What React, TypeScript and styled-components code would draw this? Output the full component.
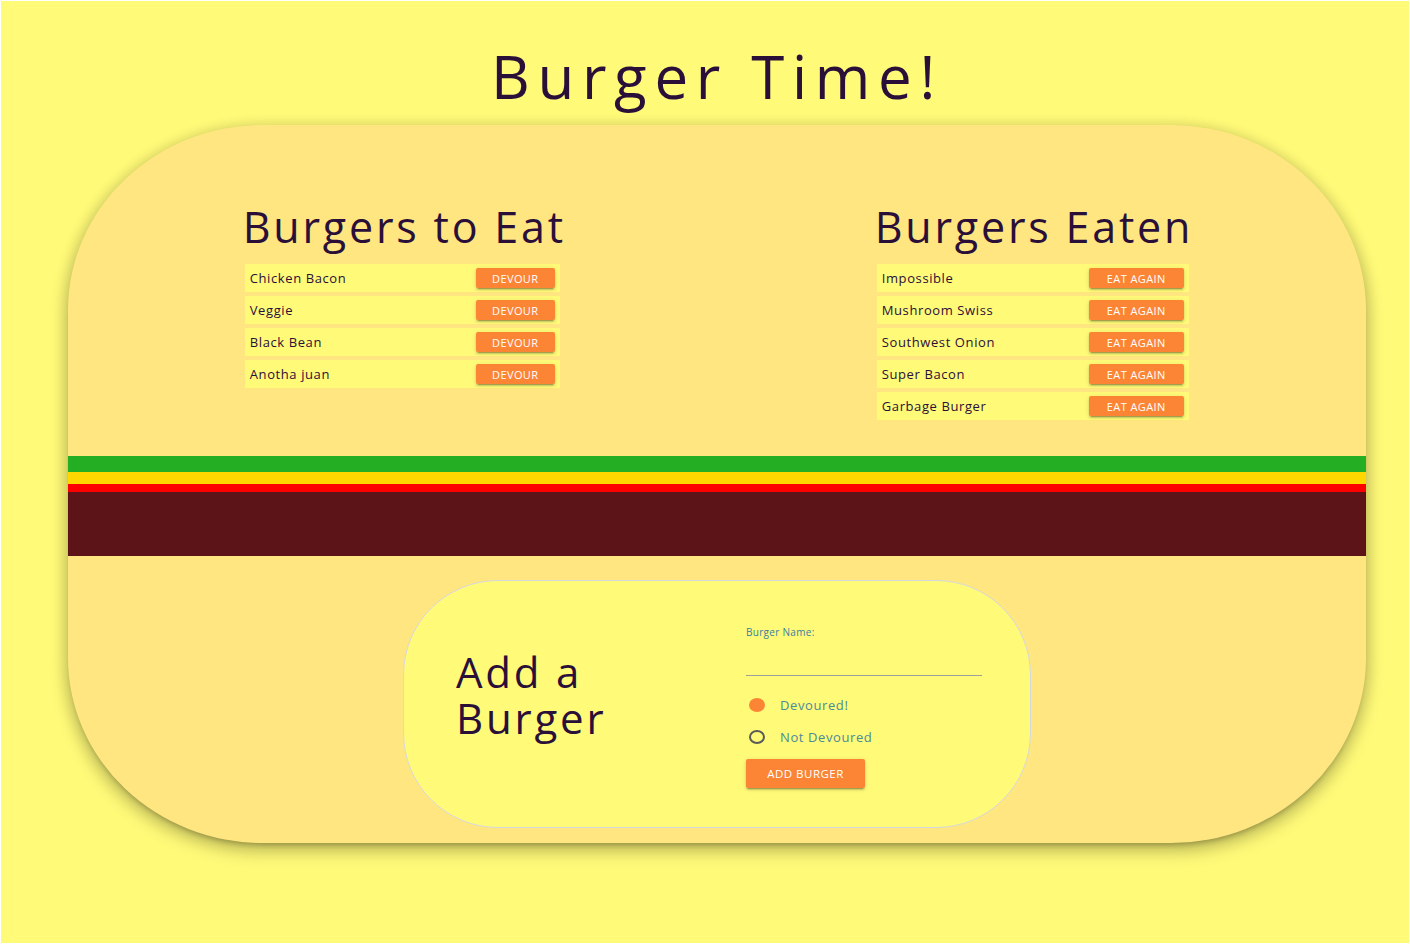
import React from "react";
import styled, { createGlobalStyle } from "styled-components";

const Global = createGlobalStyle`
  html, body { margin: 0; padding: 0; }
  body {
    background: #fffa78;
    font-family: "Open Sans", "Noto Sans", sans-serif;
    color: #2a0f38;
  }
`;

const Page = styled.div`
  width: 1410px;
  height: 944px;
  box-sizing: border-box;
  border: 1px solid #ffffff;
  padding: 36px 0 0 24px;
  display: flex;
  flex-direction: column;
  align-items: center;
`;

const Title = styled.h1`
  margin: 0;
  font-size: 60px;
  font-weight: 400;
  line-height: 78px;
  letter-spacing: 7.7px;
  color: #2a0f38;
`;

const MainCard = styled.div`
  margin-top: 10px;
  width: 1298px;
  height: 718px;
  background: #ffe680;
  border-radius: 195px / 185px;
  box-shadow: 0 8px 17px 2px rgba(0, 0, 0, 0.16), 0 3px 14px 2px rgba(0, 0, 0, 0.14),
    0 5px 5px -3px rgba(0, 0, 0, 0.22);
  display: flex;
  flex-direction: column;
  overflow: hidden;
`;

const Columns = styled.div`
  display: grid;
  grid-template-columns: 1fr 1fr;
  padding: 74px 18px 0 19px;
  height: 331px;
  box-sizing: border-box;
`;

const Column = styled.div`
  display: flex;
  flex-direction: column;
  align-items: center;
`;

const ColumnInner = styled.div<{ $w: number }>`
  width: ${(p) => p.$w}px;
  display: flex;
  flex-direction: column;
`;

const ColumnTitle = styled.h2`
  margin: 0 0 9px -2px;
  font-size: 43px;
  font-weight: 400;
  line-height: 56px;
  white-space: nowrap;
  letter-spacing: 2.8px;
`;

const List = styled.div`
  display: flex;
  flex-direction: column;
  gap: 4px;
`;

const Row = styled.div`
  height: 28px;
  background: #fffa78;
  display: flex;
  align-items: center;
  justify-content: space-between;
  padding: 0 5px 0 5px;
  font-size: 13px;
  letter-spacing: 0.6px;
  color: #2a0f38;
`;

const SmallButton = styled.button<{ $w: number }>`
  width: ${(p) => p.$w}px;
  height: 20px;
  border: none;
  border-radius: 2px;
  background: #fb8535;
  color: #ffffff;
  font-family: inherit;
  font-size: 11px;
  letter-spacing: 0.4px;
  text-transform: uppercase;
  padding: 0;
  box-shadow: 0 2px 2px 0 rgba(0, 0, 0, 0.14), 0 1px 5px 0 rgba(0, 0, 0, 0.12),
    0 3px 1px -2px rgba(0, 0, 0, 0.2);
`;

const Stripe = styled.div<{ $h: number; $c: string }>`
  height: ${(p) => p.$h}px;
  background: ${(p) => p.$c};
  flex-shrink: 0;
`;

const Bottom = styled.div`
  flex: 1;
  display: flex;
  justify-content: center;
  padding-top: 24px;
`;

const FormCard = styled.div`
  width: 628px;
  height: 248px;
  box-sizing: border-box;
  background: #fffa78;
  border: 1px solid #d6d8e0;
  border-radius: 95px;
  display: grid;
  grid-template-columns: 342px 1fr;
`;

const FormTitle = styled.h3`
  margin: 0;
  padding: 68px 0 0 52px;
  font-size: 42px;
  font-weight: 400;
  line-height: 46px;
  letter-spacing: 2.8px;
  color: #2a0f38;
`;

const Form = styled.div`
  padding-top: 45px;
  display: flex;
  flex-direction: column;
  width: 236px;
`;

const Label = styled.label`
  font-size: 10px;
  color: #3b7ea0;
  line-height: 12px;
  letter-spacing: 0.3px;
`;

const Input = styled.div`
  height: 37px;
  border-bottom: 1px solid #9e9e9e;
  margin-bottom: 13px;
`;

const RadioRow = styled.div`
  display: flex;
  align-items: center;
  height: 32px;
  font-size: 13px;
  color: #4b8a9a;
  letter-spacing: 0.6px;
`;

const RadioDot = styled.span<{ $on: boolean }>`
  width: 16px;
  height: 14px;
  border-radius: 50%;
  box-sizing: border-box;
  margin: 0 15px 0 3px;
  background: ${(p) => (p.$on ? "#fb8535" : "transparent")};
  border: ${(p) => (p.$on ? "none" : "2px solid #5a5a5a")};
`;

const AddButton = styled.button`
  margin-top: 6px;
  width: 119px;
  height: 29px;
  border: none;
  border-radius: 2px;
  background: #fb8535;
  color: #ffffff;
  font-family: inherit;
  font-size: 11.5px;
  letter-spacing: 0.5px;
  text-transform: uppercase;
  box-shadow: 0 2px 2px 0 rgba(0, 0, 0, 0.14), 0 1px 5px 0 rgba(0, 0, 0, 0.12),
    0 3px 1px -2px rgba(0, 0, 0, 0.2);
`;

const toEat = ["Chicken Bacon", "Veggie", "Black Bean", "Anotha juan"];
const eaten = ["Impossible", "Mushroom Swiss", "Southwest Onion", "Super Bacon", "Garbage Burger"];

export default function App() {
  return (
    <>
      <Global />
      <Page>
        <Title>Burger Time!</Title>
        <MainCard>
          <Columns>
            <Column>
              <ColumnInner $w={315}>
                <ColumnTitle>Burgers to Eat</ColumnTitle>
                <List>
                  {toEat.map((b) => (
                    <Row key={b}>
                      <span>{b}</span>
                      <SmallButton $w={79}>Devour</SmallButton>
                    </Row>
                  ))}
                </List>
              </ColumnInner>
            </Column>
            <Column>
              <ColumnInner $w={312}>
                <ColumnTitle>Burgers Eaten</ColumnTitle>
                <List>
                  {eaten.map((b) => (
                    <Row key={b}>
                      <span>{b}</span>
                      <SmallButton $w={95}>Eat Again</SmallButton>
                    </Row>
                  ))}
                </List>
              </ColumnInner>
            </Column>
          </Columns>
          <Stripe $h={16} $c="#23ae23" />
          <Stripe $h={12} $c="#ffd700" />
          <Stripe $h={8} $c="#ff0000" />
          <Stripe $h={64} $c="#5c1418" />
          <Bottom>
            <FormCard>
              <FormTitle>
                Add a<br />
                Burger
              </FormTitle>
              <Form>
                <Label>Burger Name:</Label>
                <Input />
                <RadioRow>
                  <RadioDot $on={true} />
                  Devoured!
                </RadioRow>
                <RadioRow>
                  <RadioDot $on={false} />
                  Not Devoured
                </RadioRow>
                <AddButton>Add Burger</AddButton>
              </Form>
            </FormCard>
          </Bottom>
        </MainCard>
      </Page>
    </>
  );
}
